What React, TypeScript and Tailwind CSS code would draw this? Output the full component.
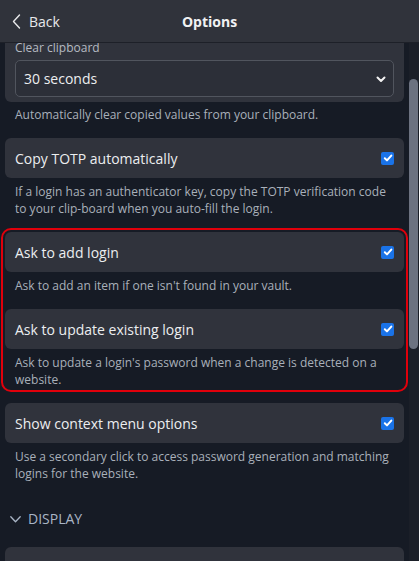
import React from 'react';

const font = { fontFamily: '"Open Sans", "Noto Sans", sans-serif' };

function Check() {
  return (
    <span className="flex h-[13px] w-[13px] items-center justify-center rounded-[2px] bg-[#1a73e8]">
      <svg width="10" height="10" viewBox="0 0 10 10" fill="none">
        <path d="M1.8 5.2 L4 7.4 L8.3 2.6" stroke="white" strokeWidth="2" strokeLinecap="round" strokeLinejoin="round" />
      </svg>
    </span>
  );
}

function Setting({ title, desc, last }: { title: string; desc: string; last?: boolean }) {
  return (
    <div className={last ? '' : 'mb-[15px]'}>
      <div className="flex h-10 items-center justify-between rounded-md bg-[#30333c] px-[10px]">
        <span className="text-[14px] text-[#eceef0]">{title}</span>
        <Check />
      </div>
      <p className="mt-[5px] px-[10px] text-[12px] leading-[17px] text-[#a9b0ba]">{desc}</p>
    </div>
  );
}

export default function App() {
  return (
    <div className="flex h-[561px] w-[419px] flex-col overflow-hidden bg-[#161b25]" style={font}>
      <div className="relative flex h-[43px] shrink-0 items-center border-b border-[#1d2028] bg-[#30333b] px-3">
        <div className="flex items-center gap-[8px] text-[14px] text-[#e8e9eb]">
          <svg width="9" height="15" viewBox="0 0 9 15" fill="none">
            <path d="M7.5 1 L1.5 7.5 L7.5 14" stroke="#e8e9eb" strokeWidth="1.4" strokeLinecap="round" strokeLinejoin="round" />
          </svg>
          <span>Back</span>
        </div>
        <div className="pointer-events-none absolute left-0 right-0 text-center text-[14px] font-bold text-[#f1f2f3]">Options</div>
      </div>

      <div className="flex min-h-0 flex-1">
        <div className="flex-1 overflow-hidden px-[5px]">
          <div className="-mt-[12px]">
            <div className="rounded-md bg-[#30333c] px-[10px] pb-[5px] pt-[8px]">
              <div className="text-[12px] leading-[17px] text-[#b5bac2]">Clear clipboard</div>
              <div className="mt-[4px] flex h-[37px] items-center justify-between rounded-[5px] border border-[#51555e] bg-[#2c2f38] pl-[8px] pr-[6px]">
                <span className="text-[14px] text-[#eceef0]">30 seconds</span>
                <svg width="12" height="12" viewBox="0 0 12 12" fill="none">
                  <path d="M2.5 4.5 L6 8 L9.5 4.5" stroke="#f2f2f2" strokeWidth="2" strokeLinecap="round" strokeLinejoin="round" />
                </svg>
              </div>
            </div>
            <p className="mb-[15px] mt-[4px] px-[10px] text-[12px] leading-[17px] text-[#a9b0ba]">
              Automatically clear copied values from your clipboard.
            </p>

            <Setting
              title="Copy TOTP automatically"
              desc="If a login has an authenticator key, copy the TOTP verification code to your clip-board when you auto-fill the login."
            />

            <div className="mb-[15px] rounded-md outline-2 outline-offset-2 outline-[#e0000b]">
              <Setting title="Ask to add login" desc="Ask to add an item if one isn't found in your vault." />
              <Setting
                title="Ask to update existing login"
                desc="Ask to update a login's password when a change is detected on a website."
                last
              />
            </div>

            <Setting
              title="Show context menu options"
              desc="Use a secondary click to access password generation and matching logins for the website."
              last
            />

            <div className="mt-[27px] flex items-center gap-[7px] pl-[5px] text-[14px] leading-[20px] text-[#a9b5c6]">
              <svg width="11" height="7" viewBox="0 0 11 7" fill="none">
                <path d="M0.8 0.8 L5.5 5.8 L10.2 0.8" stroke="#a9b5c6" strokeWidth="1.3" strokeLinecap="round" strokeLinejoin="round" />
              </svg>
              <span>DISPLAY</span>
            </div>

            <div className="mt-[18px] h-10 rounded-md bg-[#30333c]" />
          </div>
        </div>

        <div className="w-[10px] shrink-0 bg-[#1b1f28] pt-[36px]">
          <div className="h-[270px] w-[9px] rounded-full bg-[#6c7280]" />
        </div>
      </div>
    </div>
  );
}
